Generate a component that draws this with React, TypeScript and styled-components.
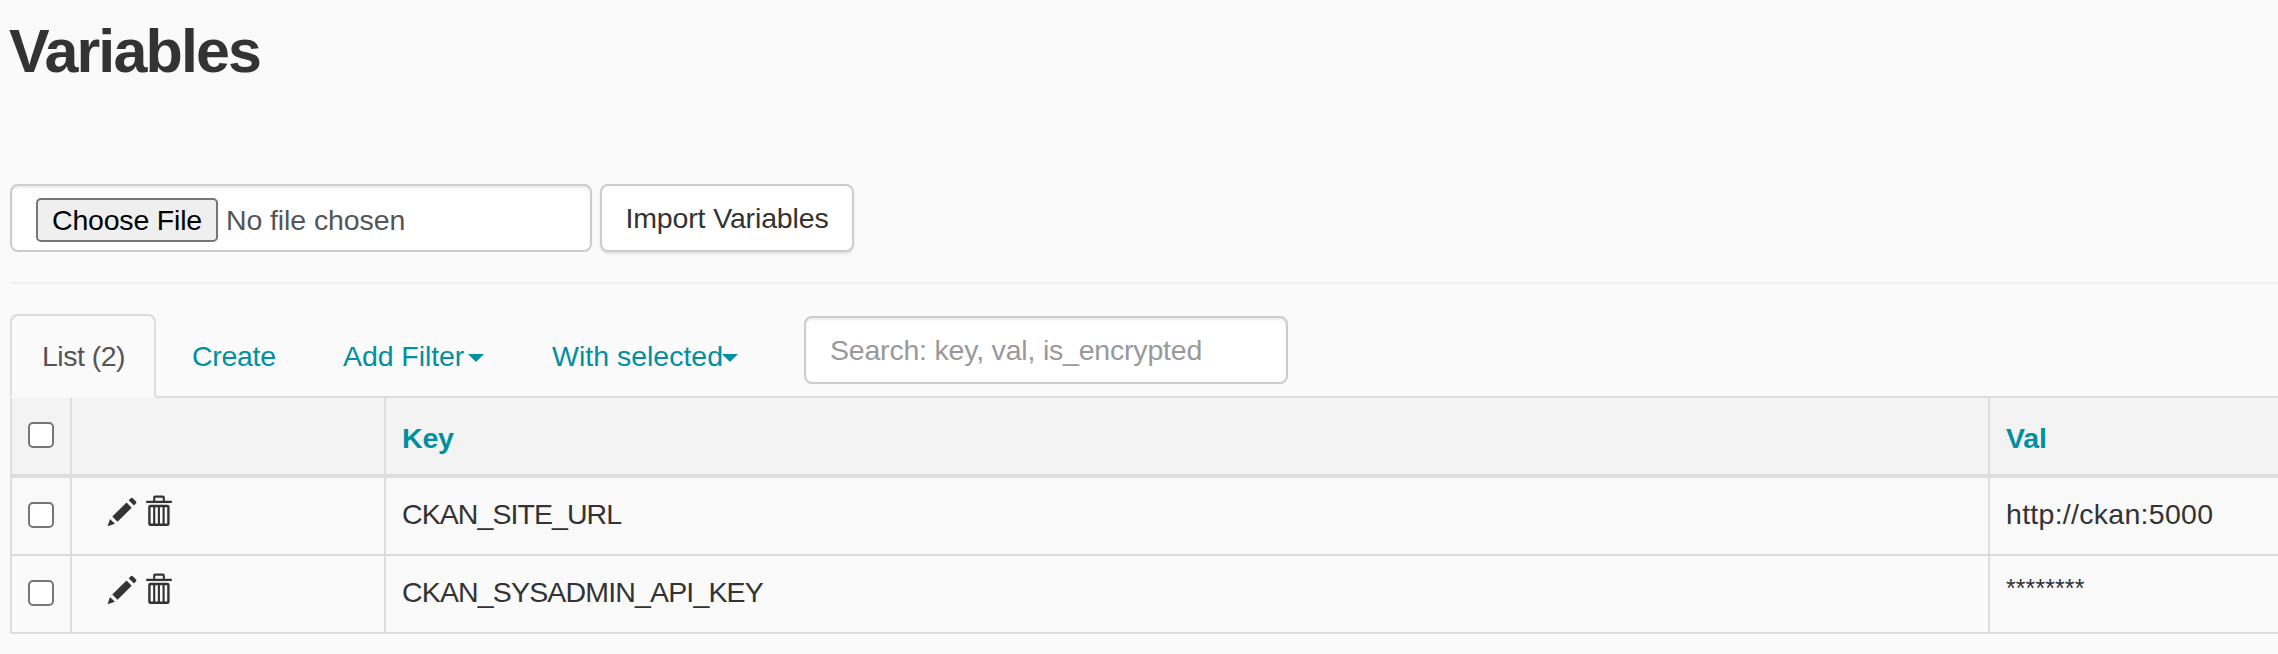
import React from "react";
import styled, { createGlobalStyle } from "styled-components";

const GlobalStyle = createGlobalStyle`
  *, *::before, *::after { box-sizing: border-box; }
  html, body { margin: 0; background: #fafafa; overflow: hidden; }
  body {
    font-family: "Liberation Sans", Arial, sans-serif;
    font-size: 28.5px;
    line-height: 40px;
    color: #333;
  }
`;

const Page = styled.main`
  height: 654px;
  padding: 18px 0 0 10px;
  overflow: hidden;
`;

const Title = styled.h1`
  margin: 0 0 100px -1px;
  font-size: 61px;
  line-height: 66px;
  font-weight: 700;
  letter-spacing: -1.87px;
`;

const Label = styled.span<{ $track?: number }>`
  letter-spacing: ${(p) => p.$track ?? 0}px;
  white-space: nowrap;
`;

const MaskedValue = styled.span`
  position: relative;
  top: -5px;
  font-size: 25px;
  letter-spacing: 0.08px;
`;

const ImportForm = styled.form`
  display: flex;
  gap: 8px;
`;

const FileField = styled.div`
  display: flex;
  align-items: center;
  width: 582px;
  height: 68px;
  padding: 4px 0 0 24px;
  border: 2px solid #ccc;
  border-radius: 8px;
  background: #fff;
  color: #555;
  box-shadow: inset 0 2px 2px rgba(0, 0, 0, 0.075);
`;

const ChooseButton = styled.button`
  width: 182px;
  height: 44px;
  margin-right: 8px;
  padding: 0;
  border: 2px solid #767676;
  border-radius: 5px;
  background: #efefef;
  color: #000;
  font: inherit;
`;

const ImportButton = styled.button`
  width: 254px;
  height: 68px;
  padding: 0;
  border: 2px solid #ccc;
  border-radius: 8px;
  background: #fff;
  color: #333;
  font: inherit;
  box-shadow: 0 2px 2px rgba(0, 0, 0, 0.09);
`;

const Divider = styled.hr`
  height: 2px;
  margin: 30px 0;
  border: 0;
  background: #eee;
`;

const Tabs = styled.nav`
  display: flex;
  height: 84px;
  box-shadow: inset 0 -2px #ddd;
`;

const Tab = styled.a<{ $active?: boolean; $width: number }>`
  display: flex;
  align-items: center;
  width: ${(p) => p.$width}px;
  height: 84px;
  padding-left: ${(p) => (p.$active ? 30 : 34)}px;
  border: 2px solid ${(p) => (p.$active ? "#ddd" : "transparent")};
  border-bottom-color: ${(p) => (p.$active ? "#fafafa" : "transparent")};
  border-radius: ${(p) => (p.$active ? "8px 8px 0 0" : "0")};
  background: ${(p) => (p.$active ? "#fafafa" : "transparent")};
  color: ${(p) => (p.$active ? "#555" : "#0090a0")};
`;

const Caret = styled.span<{ $gap: number }>`
  margin: 3px 0 0 ${(p) => p.$gap}px;
  border-top: 8px solid currentColor;
  border-left: 8px solid transparent;
  border-right: 8px solid transparent;
`;

const SearchInput = styled.input`
  width: 484px;
  height: 68px;
  margin-top: 2px;
  padding: 0 24px;
  border: 2px solid #ccc;
  border-radius: 8px;
  outline: 0;
  background: #fff;
  font: inherit;
  letter-spacing: -0.2px;
  box-shadow: inset 0 2px 2px rgba(0, 0, 0, 0.075);
  &::placeholder { color: #999; opacity: 1; }
`;

const Table = styled.div`
  border-left: 2px solid #ddd;
`;

const Row = styled.div<{ $kind: "head" | "odd" | "even" }>`
  display: grid;
  grid-template-columns: 60px 314px 1604px 1fr;
  height: ${(p) => (p.$kind === "head" ? 80 : 78)}px;
  border-bottom: ${(p) => (p.$kind === "head" ? 4 : 2)}px solid #ddd;
  background: ${(p) => ({ head: "#f3f3f3", odd: "#f9f9f9", even: "#fafafa" })[p.$kind]};
  ${(p) => p.$kind === "head" && "font-weight: 700; color: #0090a0;"}
`;

const Cell = styled.div<{ $head?: boolean }>`
  padding: ${(p) => (p.$head ? 20 : 16)}px 16px 0;
  border-right: 2px solid #ddd;
  &:last-child { border-right: 0; }
`;

const CheckCell = styled(Cell)`
  padding: 24px 0 0 16px;
`;

const Checkbox = styled.input`
  display: block;
  appearance: none;
  width: 26px;
  height: 26px;
  margin: 0;
  border: 2px solid #767676;
  border-radius: 5px;
  background: #fff;
`;

const Actions = styled(Cell)`
  display: flex;
  gap: 6px;
  padding: 16px 0 0 34px;
`;

const Pencil = () => (
  <svg width="32" height="34" viewBox="0 0 32 34" fill="#333">
    <path d="M1.5 32.2 4 25 8.9 29.8Z" />
    <path d="M6.3 22.6 20.5 8.5 25.7 13.7 11.5 27.8Z" />
    <path d="M22.7 6.3 24.8 4.2Q25.8 3.3 26.8 4.2L30 7.4Q31 8.4 30 9.3L28 11.4Z" />
  </svg>
);

const Trash = () => (
  <svg width="30" height="34" viewBox="0 0 30 34" fill="none" stroke="#333">
    <path d="M10.2 7.5V3.6Q10.2 2.6 11.2 2.6H18.8Q19.8 2.6 19.8 3.6V7.5" strokeWidth="2.1" />
    <path d="M2.2 7.9H27.8" strokeWidth="2.3" />
    <rect x="5.4" y="12" width="19" height="18.8" rx="1" strokeWidth="2.4" />
    <path d="M10.2 12V31M14.9 12V31M19.6 12V31" strokeWidth="2.1" />
  </svg>
);

const rows = [
  { key: "CKAN_SITE_URL", keyTrack: -0.93, val: "http://ckan:5000", valTrack: 0.28, masked: false },
  { key: "CKAN_SYSADMIN_API_KEY", keyTrack: -0.84, val: "********", valTrack: 0, masked: true },
];

export default function App() {
  return (
    <Page>
      <GlobalStyle />
      <Title>Variables</Title>
      <ImportForm>
        <FileField>
          <ChooseButton type="button"><Label $track={-0.19}>Choose File</Label></ChooseButton>
          <Label $track={-0.1}>No file chosen</Label>
        </FileField>
        <ImportButton type="button"><Label $track={-0.14}>Import Variables</Label></ImportButton>
      </ImportForm>
      <Divider />
      <Tabs>
        <Tab $active $width={146}><Label $track={-0.5}>List (2)</Label></Tab>
        <Tab $width={151}><Label $track={-0.3}>Create</Label></Tab>
        <Tab $width={209}><Label $track={-0.07}>Add Filter</Label><Caret $gap={4} /></Tab>
        <Tab $width={288}><Label>With selected</Label><Caret $gap={-1} /></Tab>
        <SearchInput placeholder="Search: key, val, is_encrypted" />
      </Tabs>
      <Table>
        <Row $kind="head">
          <CheckCell><Checkbox type="checkbox" /></CheckCell>
          <Cell $head />
          <Cell $head><Label $track={-0.2}>Key</Label></Cell>
          <Cell $head><Label $track={-0.2}>Val</Label></Cell>
        </Row>
        {rows.map((row, i) => (
          <Row key={row.key} $kind={i % 2 ? "even" : "odd"}>
            <CheckCell><Checkbox type="checkbox" /></CheckCell>
            <Actions><Pencil /><Trash /></Actions>
            <Cell><Label $track={row.keyTrack}>{row.key}</Label></Cell>
            <Cell>
              {row.masked ? <MaskedValue>{row.val}</MaskedValue> : <Label $track={row.valTrack}>{row.val}</Label>}
            </Cell>
          </Row>
        ))}
      </Table>
    </Page>
  );
}
